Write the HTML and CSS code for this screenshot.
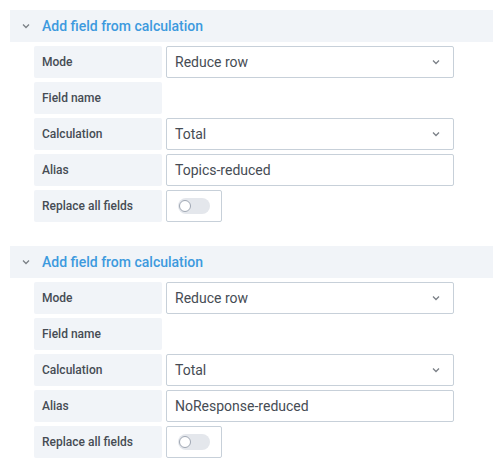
FILE: index.html
```html
<!DOCTYPE html>
<html>
<head>
<meta charset="utf-8">
<link rel="stylesheet" href="styles.css">
</head>
<body>
<div class="page">
  <section class="block">
    <div class="header">
      <svg class="chev" width="10" height="6" viewBox="0 0 10 6"><path d="M2 1.5 L5 4.5 L8 1.5" fill="none" stroke="#7b8087" stroke-width="1.3"/></svg>
      <span class="title">Add field from calculation</span>
    </div>
    <div class="rows">
      <div class="row"><div class="label">Mode</div><div class="input select"><span>Reduce row</span><svg width="10" height="6" viewBox="0 0 10 6"><path d="M2 1.5 L5 4.5 L8 1.5" fill="none" stroke="#7b8087" stroke-width="1.3"/></svg></div></div>
      <div class="row"><div class="label">Field name</div></div>
      <div class="row"><div class="label">Calculation</div><div class="input select"><span>Total</span><svg width="10" height="6" viewBox="0 0 10 6"><path d="M2 1.5 L5 4.5 L8 1.5" fill="none" stroke="#7b8087" stroke-width="1.3"/></svg></div></div>
      <div class="row"><div class="label">Alias</div><div class="input"><span>Topics-reduced</span></div></div>
      <div class="row"><div class="label">Replace all fields</div><div class="switchbox"><div class="track"><div class="knob"></div></div></div></div>
    </div>
  </section>
  <section class="block">
    <div class="header">
      <svg class="chev" width="10" height="6" viewBox="0 0 10 6"><path d="M2 1.5 L5 4.5 L8 1.5" fill="none" stroke="#7b8087" stroke-width="1.3"/></svg>
      <span class="title">Add field from calculation</span>
    </div>
    <div class="rows">
      <div class="row"><div class="label">Mode</div><div class="input select"><span>Reduce row</span><svg width="10" height="6" viewBox="0 0 10 6"><path d="M2 1.5 L5 4.5 L8 1.5" fill="none" stroke="#7b8087" stroke-width="1.3"/></svg></div></div>
      <div class="row"><div class="label">Field name</div></div>
      <div class="row"><div class="label">Calculation</div><div class="input select"><span>Total</span><svg width="10" height="6" viewBox="0 0 10 6"><path d="M2 1.5 L5 4.5 L8 1.5" fill="none" stroke="#7b8087" stroke-width="1.3"/></svg></div></div>
      <div class="row"><div class="label">Alias</div><div class="input"><span>NoResponse-reduced</span></div></div>
      <div class="row"><div class="label">Replace all fields</div><div class="switchbox"><div class="track"><div class="knob"></div></div></div></div>
    </div>
  </section>
</div>
</body>
</html>
```

FILE: styles.css
```css
html, body {
  margin: 0;
  padding: 0;
  background: #ffffff;
}
body {
  font-family: Roboto, "Liberation Sans", sans-serif;
  color: #464c54;
}
.page {
  padding: 10px 0 0 10px;
  display: flex;
  flex-direction: column;
  gap: 24px;
}
.block {
  display: flex;
  flex-direction: column;
  gap: 4px;
}
.header {
  height: 32px;
  background: #f1f4f8;
  display: flex;
  align-items: center;
}
.chev {
  margin-left: 11px;
  margin-right: 11px;
}
.title {
  color: #3d9ade;
  font-size: 14px;
  font-weight: 500;
}
.rows {
  padding-left: 24px;
  display: flex;
  flex-direction: column;
  gap: 4px;
}
.row {
  display: flex;
  gap: 4px;
  height: 32px;
}
.label {
  width: 128px;
  box-sizing: border-box;
  background: #f1f4f8;
  border-radius: 2px;
  padding-left: 8px;
  display: flex;
  align-items: center;
  font-size: 12px;
  font-weight: 500;
  color: #464c54;
}
.input {
  width: 288px;
  box-sizing: border-box;
  border: 1px solid #c7d0d9;
  border-radius: 2px;
  display: flex;
  align-items: center;
  justify-content: space-between;
  padding: 0 12px 0 8px;
  font-size: 14px;
  color: #464c54;
}
.switchbox {
  width: 56px;
  box-sizing: border-box;
  border: 1px solid #c7d0d9;
  border-radius: 2px;
  display: flex;
  align-items: center;
  padding-left: 11px;
}
.track {
  width: 32px;
  height: 16px;
  border-radius: 8px;
  background: #e4e7ec;
  display: flex;
  align-items: center;
}
.knob {
  width: 12px;
  height: 12px;
  border-radius: 50%;
  background: #fff;
  border: 1px solid #9fa7b3;
  box-sizing: border-box;
  margin-left: 1px;
}
```
